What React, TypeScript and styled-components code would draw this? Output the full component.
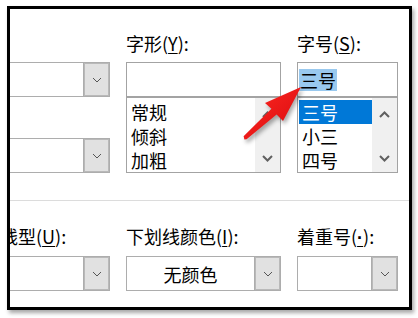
import React from "react";
import styled, { createGlobalStyle } from "styled-components";

const GlobalStyle = createGlobalStyle`
  html, body { margin: 0; padding: 0; background: #fff; }
  body { font-family: "Noto Sans CJK SC", "Noto Sans", sans-serif; color: #000; }
`;

const Page = styled.div`
  position: relative;
  width: 418px;
  height: 318px;
  overflow: hidden;
  background: #fff;
`;

const Frame = styled.div`
  margin: 6px 0 0 7px;
  width: 405px;
  height: 304px;
  box-sizing: border-box;
  border: 3px solid #000;
  box-shadow: 2px 3px 4px rgba(0, 0, 0, 0.35);
  background: #fff;
  overflow: hidden;
  padding-top: 22px;
`;

const Grid = styled.div<{ $rowGap: number }>`
  display: grid;
  grid-template-columns: 164px 155px 101px;
  column-gap: 16px;
  row-gap: ${(p) => p.$rowGap}px;
  margin-left: -64px;
`;

const Label = styled.div`
  font-size: 18px;
  line-height: 24px;
  height: 24px;
  white-space: nowrap;
  color: #000;
  u { text-decoration: underline; text-underline-offset: 2px; }
`;

const LatinDot = styled.u`
  font-family: "Liberation Sans", "Noto Sans", sans-serif;
  font-weight: bold;
`;

const Stack = styled.div<{ $gap: number }>`
  display: flex;
  flex-direction: column;
  gap: ${(p) => p.$gap}px;
`;

const Combo = styled.div`
  display: flex;
  height: 35px;
  box-sizing: border-box;
  border: 1px solid #adadad;
  background: #fff;
`;

const ComboField = styled.div`
  flex: 1;
  display: flex;
  align-items: center;
  justify-content: center;
  font-size: 18px;
  line-height: 24px;
  color: #000;
`;

const ComboButton = styled.div`
  width: 25px;
  display: flex;
  align-items: center;
  justify-content: center;
  background: #e1e1e1;
  border-left: 1px solid #adadad;
  box-shadow: inset 0 0 0 1px #b9b9b9;
`;

const TextBox = styled.div`
  height: 35px;
  box-sizing: border-box;
  border: 1px solid #a3a3a3;
  display: flex;
  align-items: center;
  padding-left: 1px;
  background: #fff;
`;

const Selection = styled.span`
  background: #99c9ef;
  font-size: 18px;
  line-height: 22px;
  padding: 0 1px 0 1px;
  color: #000;
`;

const ListBox = styled.div`
  height: 76px;
  box-sizing: border-box;
  border: 1px solid #a3a3a3;
  display: flex;
  background: #fff;
`;

const Items = styled.div`
  flex: 1;
  padding-top: 2px;
`;

const Item = styled.div<{ $selected?: boolean }>`
  height: 24px;
  line-height: 24px;
  font-size: 18px;
  padding-left: ${(p) => (p.$selected ? 3 : 4)}px;
  margin-left: ${(p) => (p.$selected ? 1 : 0)}px;
  background: ${(p) => (p.$selected ? "#0078d7" : "transparent")};
  color: ${(p) => (p.$selected ? "#fff" : "#000")};
`;

const ScrollBar = styled.div`
  width: 25px;
  background: #f0f0f0;
  display: flex;
  flex-direction: column;
  align-items: center;
  justify-content: space-between;
  padding: 13px 0 10px;
  box-sizing: border-box;
`;

const Separator = styled.div`
  margin: 27px 0 23px;
  height: 1px;
  background: #dcdcdc;
`;

const Overlay = styled.svg`
  position: absolute;
  left: 0;
  top: 0;
  pointer-events: none;
  filter: drop-shadow(2px 3px 2px rgba(0, 0, 0, 0.35));
`;

const SmallChevron = () => (
  <svg width="10" height="6" viewBox="0 0 10 6">
    <path d="M1 1 L5 5 L9 1" fill="none" stroke="#555" strokeWidth="1" />
  </svg>
);

const ScrollChevron = ({ up }: { up?: boolean }) => (
  <svg width="11" height="7" viewBox="0 0 11 7">
    <path
      d={up ? "M1 6 L5.5 1.5 L10 6" : "M1 1 L5.5 5.5 L10 1"}
      fill="none"
      stroke="#606060"
      strokeWidth="2"
    />
  </svg>
);

const DropDown = ({ value }: { value?: string }) => (
  <Combo>
    <ComboField>{value}</ComboField>
    <ComboButton>
      <SmallChevron />
    </ComboButton>
  </Combo>
);

const List = ({ items, selected }: { items: string[]; selected?: number }) => (
  <ListBox>
    <Items>
      {items.map((t, i) => (
        <Item key={t} $selected={i === selected}>
          {t}
        </Item>
      ))}
    </Items>
    <ScrollBar>
      <ScrollChevron up />
      <ScrollChevron />
    </ScrollBar>
  </ListBox>
);

export default function App() {
  return (
    <Page>
      <GlobalStyle />
      <Frame>
        <Grid $rowGap={7}>
          <Label />
          <Label>
            字形(<u>Y</u>):
          </Label>
          <Label>
            字号(<u>S</u>):
          </Label>
          <Stack $gap={41}>
            <DropDown />
            <DropDown />
          </Stack>
          <Stack $gap={0}>
            <TextBox />
            <List items={["常规", "倾斜", "加粗"]} />
          </Stack>
          <Stack $gap={0}>
            <TextBox>
              <Selection>三号</Selection>
            </TextBox>
            <List items={["三号", "小三", "四号"]} selected={0} />
          </Stack>
        </Grid>
        <Separator />
        <Grid $rowGap={8}>
          <Label>
            下划线线型(<u>U</u>):
          </Label>
          <Label>
            下划线颜色(<u>I</u>):
          </Label>
          <Label>
            着重号(<LatinDot>·</LatinDot>):
          </Label>
          <DropDown />
          <DropDown value="无颜色" />
          <DropDown />
        </Grid>
      </Frame>
      <Overlay width="418" height="318" viewBox="0 0 418 318">
        <defs>
          <linearGradient id="arrowFill" x1="0" y1="0" x2="1" y2="1">
            <stop offset="0" stopColor="#ff2a22" />
            <stop offset="1" stopColor="#d8090f" />
          </linearGradient>
        </defs>
        <polygon
          points="301,87 283,121 276.6,114.4 246.6,139.2 244.4,139.4 243.6,136.2 271.4,108.7 265,103"
          fill="url(#arrowFill)"
        />
      </Overlay>
    </Page>
  );
}
